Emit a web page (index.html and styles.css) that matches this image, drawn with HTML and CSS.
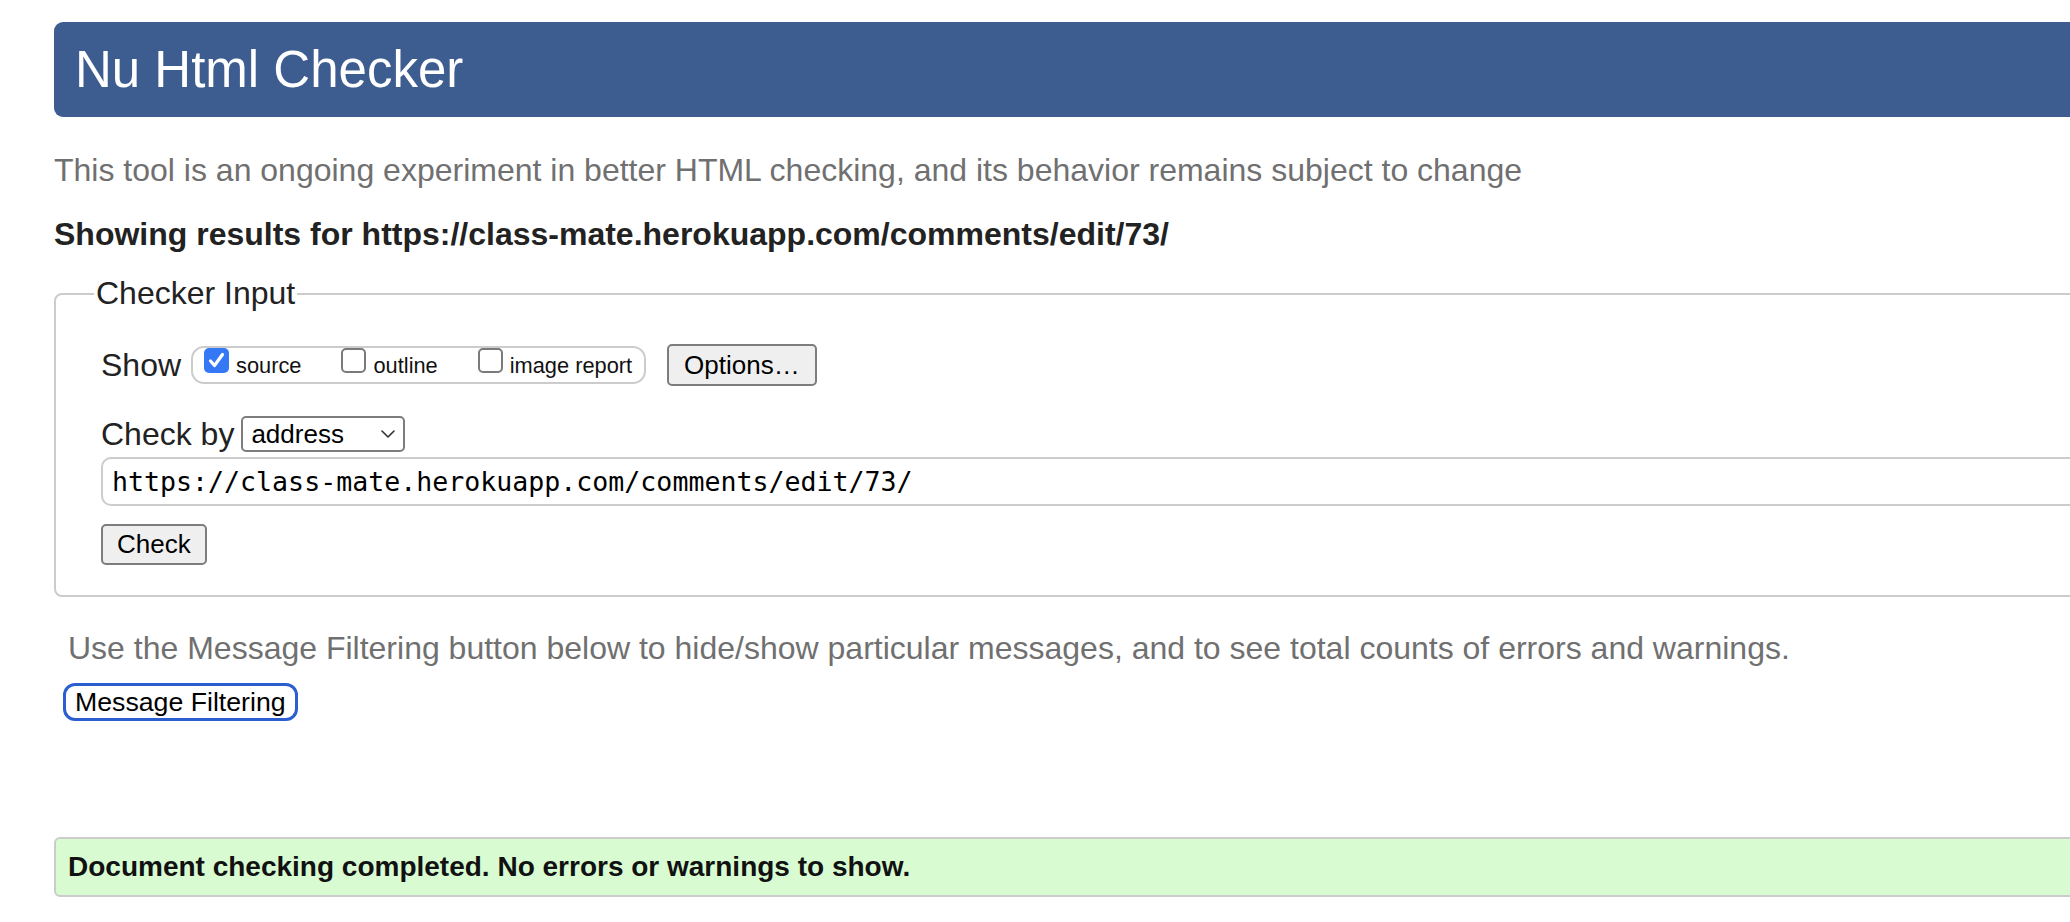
FILE: index.html
```html
<!DOCTYPE html>
<html lang="en">
<head>
<meta charset="utf-8">
<title>Nu Html Checker</title>
<link rel="stylesheet" href="styles.css">
</head>
<body>
<div class="page">
  <h1 class="banner">Nu Html Checker</h1>
  <p class="intro">This tool is an ongoing experiment in better HTML checking, and its behavior remains subject to change</p>
  <p class="results-for">Showing results for https://class-mate.herokuapp.com/comments/edit/73/</p>
  <form class="checker">
    <fieldset class="checker-input">
      <legend class="legend">Checker Input</legend>
      <div class="row row-show">
        <span class="row-label">Show</span>
        <div class="show-options">
          <label class="opt"><span class="box box-checked"><svg viewBox="0 0 25 25" width="25" height="25"><path d="M6.5 13 L10.5 17.5 L18.5 6.5" fill="none" stroke="#fff" stroke-width="3.2" stroke-linecap="round" stroke-linejoin="round"/></svg></span><span class="opt-text">source</span></label>
          <label class="opt"><span class="box"></span><span class="opt-text">outline</span></label>
          <label class="opt"><span class="box"></span><span class="opt-text">image report</span></label>
        </div>
        <button type="button" class="btn btn-options">Options…</button>
      </div>
      <div class="row row-checkby">
        <span class="row-label">Check by</span>
        <span class="select-wrap">
          <select class="select"><option>address</option></select>
          <svg class="chev" viewBox="0 0 14 8" width="14" height="8"><path d="M1 1 L7 7 L13 1" fill="none" stroke="#333" stroke-width="1.6" stroke-linecap="round" stroke-linejoin="round"/></svg>
        </span>
      </div>
      <input class="url" type="url" value="https://class-mate.herokuapp.com/comments/edit/73/">
      <button type="button" class="btn btn-check">Check</button>
    </fieldset>
  </form>
  <p class="filter-note">Use the Message Filtering button below to hide/show particular messages, and to see total counts of errors and warnings.</p>
  <button type="button" class="btn-filter">Message Filtering</button>
  <div class="success">Document checking completed. No errors or warnings to show.</div>
</div>
</body>
</html>
```

FILE: styles.css
```css
html, body {
  overflow: hidden;
}
body {
  margin: 0;
  background: #fff;
  color: #222;
  font-family: "Liberation Sans", Arial, Helvetica, sans-serif;
}
.page {
  padding: 22px 0 0 54px;
  margin-right: -90px;
}
.banner {
  margin: 0;
  height: 95px;
  line-height: 95px;
  padding-left: 21px;
  background: #3d5c8f;
  color: #fff;
  font-size: 51px;
  font-weight: normal;
  border-radius: 9px;
}
.intro {
  margin: 35.4px 0 0;
  font-size: 32px;
  line-height: 37px;
  color: #707070;
}
.results-for {
  margin: 27px 0 0;
  font-size: 32px;
  line-height: 37px;
  font-weight: bold;
  color: #222;
}
.checker {
  margin: 0;
}
.checker-input {
  margin: 22px 0 0;
  min-width: 0;
  border: 2px solid #ccc;
  border-radius: 8px;
  padding: 32px 0 30px 45px;
}
.legend {
  font-size: 32px;
  line-height: 37px;
  padding: 0 2px;
  margin-left: -7px;
  color: #222;
}
.row {
  display: flex;
  align-items: center;
}
.row-show {
  height: 42px;
}
.row-label {
  font-size: 32px;
  line-height: 37px;
  color: #222;
}
.show-options {
  display: flex;
  align-items: flex-start;
  gap: 40px;
  height: 38px;
  box-sizing: border-box;
  margin-left: 10px;
  border: 2px solid #ccc;
  border-radius: 13px;
  padding: 0 12px 0 11px;
}
.opt {
  display: flex;
  align-items: baseline;
  font-size: 21.8px;
  line-height: 26px;
  color: #111;
}
.box {
  display: block;
  width: 25px;
  height: 25px;
  box-sizing: border-box;
  margin-right: 7px;
  border: 2px solid #7a7a7a;
  border-radius: 5px;
  background: #fff;
}
.box svg {
  display: block;
}
.box-checked {
  border: none;
  background: #3478f6;
}
.btn {
  font-family: "Liberation Sans", Arial, Helvetica, sans-serif;
  font-size: 26px;
  color: #000;
  background: #efefef;
  border: 2px solid #7d7d7d;
  border-radius: 5px;
  padding: 0;
}
.btn-options {
  margin-left: 21px;
  height: 42px;
  padding: 0 15px;
}
.row-checkby {
  margin-top: 30px;
  height: 36px;
}
.select-wrap {
  position: relative;
  display: block;
  margin-left: 7px;
}
.select {
  appearance: none;
  -webkit-appearance: none;
  display: block;
  width: 164px;
  height: 36px;
  box-sizing: border-box;
  border: 2px solid #7d7d7d;
  border-radius: 5px;
  background: #fff;
  font-family: "Liberation Sans", Arial, Helvetica, sans-serif;
  font-size: 26px;
  color: #000;
  padding: 0 0 0 8px;
  margin: 0;
}
.chev {
  position: absolute;
  right: 10px;
  top: 14px;
  pointer-events: none;
}
.url {
  display: block;
  box-sizing: border-box;
  width: 100%;
  height: 49px;
  margin: 5px 0 0;
  border: 2px solid #ccc;
  border-radius: 10px;
  padding: 0 9px;
  font-family: "DejaVu Sans Mono", "Liberation Mono", monospace;
  font-size: 26.6px;
  color: #000;
  background: #fff;
}
.btn-check {
  display: block;
  height: 41px;
  padding: 0 14px;
  margin-top: 18px;
}
.filter-note {
  margin: 32.5px 0 0 14px;
  font-size: 32px;
  line-height: 37px;
  color: #707070;
}
.btn-filter {
  display: block;
  margin: 16px 0 0 9px;
  height: 38px;
  box-sizing: border-box;
  border: 3px solid #2b5fcf;
  border-radius: 12px;
  background: #fff;
  padding: 0 9px;
  font-family: "Liberation Sans", Arial, Helvetica, sans-serif;
  font-size: 26.7px;
  line-height: 32px;
  color: #000;
}
.success {
  margin-top: 116px;
  border: 2px solid #ccc;
  border-radius: 6px;
  background: #d8fbd1;
  padding: 12px 12px;
  font-size: 28px;
  line-height: 32px;
  font-weight: bold;
  color: #111;
}
```
